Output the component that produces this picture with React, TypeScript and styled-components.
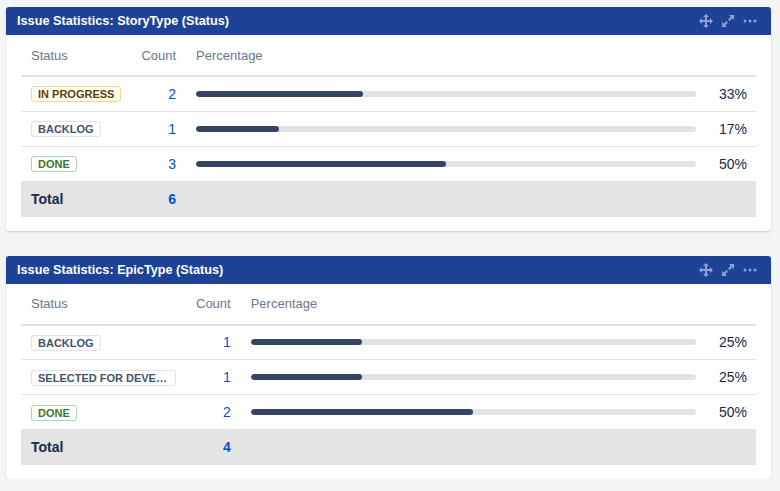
import React from 'react';
import styled, { createGlobalStyle } from 'styled-components';

const GlobalStyle = createGlobalStyle`
  body {
    margin: 0;
    background: #f4f5f7;
    font-family: "Liberation Sans", Arial, sans-serif;
    color: #172b4d;
  }
`;

const Page = styled.div`
  display: flex;
  flex-direction: column;
  gap: 25px;
  padding: 7px 9px 0 6px;
`;

const Card = styled.section`
  background: #fff;
  border-radius: 3px;
  box-shadow: 0 1px 2px rgba(9, 30, 66, 0.2);
  overflow: hidden;
`;

const CardHeader = styled.header`
  display: flex;
  align-items: center;
  justify-content: space-between;
  height: 28px;
  padding: 0 14px 0 11px;
  background: #1e4396;
`;

const Title = styled.h2`
  margin: 0;
  font-size: 12.7px;
  font-weight: bold;
  color: #fff;
`;

const Tools = styled.div`
  display: flex;
  align-items: center;
  gap: 8px;
  color: #8ea3d2;
`;

const Body = styled.div`
  padding: 0 15px 14px;
`;

const Table = styled.table`
  width: 100%;
  border-collapse: collapse;
  font-size: 14px;
`;

const Th = styled.th<{ $align?: string }>`
  height: 40px;
  padding: 0 10px;
  font-size: 13px;
  font-weight: normal;
  color: #6b778c;
  text-align: ${(p) => p.$align || 'left'};
  white-space: nowrap;
  border-bottom: 2px solid #dfe1e6;
`;

const Row = styled.tr<{ $total?: boolean }>`
  height: 35px;
  background: ${(p) => (p.$total ? '#e4e4e4' : '#fff')};
  border-bottom: 1px solid #dfe1e6;
`;

const Td = styled.td<{ $align?: string; $wide?: boolean }>`
  padding: 0 ${(p) => (p.$wide ? '0' : '10px')} 0 10px;
  text-align: ${(p) => p.$align || 'left'};
  white-space: nowrap;
  width: ${(p) => (p.$wide ? '100%' : 'auto')};
`;

const PctCell = styled.td`
  padding: 0 9px 0 23px;
  text-align: right;
  white-space: nowrap;
  color: #172b4d;
`;

const TotalLabel = styled.span`
  font-weight: bold;
  color: #172b4d;
`;

const Count = styled.span<{ $bold?: boolean }>`
  color: #0052cc;
  font-weight: ${(p) => (p.$bold ? 'bold' : 'normal')};
`;

const lozengeColors: Record<string, { color: string; border: string }> = {
  progress: { color: '#594300', border: '#ffd97a' },
  default: { color: '#42526e', border: '#dfe1e6' },
  done: { color: '#3a7a2b', border: '#add5b4' },
};

const Lozenge = styled.span<{ $kind: string }>`
  display: inline-block;
  box-sizing: border-box;
  max-width: 145px;
  height: 16px;
  line-height: 14px;
  padding: 0 6px;
  border: 1px solid ${(p) => lozengeColors[p.$kind].border};
  border-radius: 3px;
  font-size: 11px;
  font-weight: bold;
  text-transform: uppercase;
  color: ${(p) => lozengeColors[p.$kind].color};
  overflow: hidden;
  text-overflow: ellipsis;
  white-space: nowrap;
  vertical-align: middle;
`;

const Track = styled.div`
  height: 6px;
  border-radius: 3px;
  background: #e1e3e8;
  overflow: hidden;
`;

const Fill = styled.div`
  height: 100%;
  border-radius: 3px;
  background: #344563;
`;

const MoveIcon = () => (
  <svg width="14" height="14" viewBox="0 0 14 14" fill="currentColor">
    <path d="M7 0 L10 3 H8 V6 H11 V4 L14 7 L11 10 V8 H8 V11 H10 L7 14 L4 11 H6 V8 H3 V10 L0 7 L3 4 V6 H6 V3 H4 Z" />
  </svg>
);

const ExpandIcon = () => (
  <svg width="14" height="14" viewBox="0 0 14 14" fill="currentColor">
    <path d="M8 1 H13 V6 L11.2 4.2 L8.5 6.9 L7.1 5.5 L9.8 2.8 Z" />
    <path d="M6 13 H1 V8 L2.8 9.8 L5.5 7.1 L6.9 8.5 L4.2 11.2 Z" />
  </svg>
);

const MoreIcon = () => (
  <svg width="14" height="14" viewBox="0 0 14 14" fill="currentColor">
    <circle cx="2" cy="7" r="1.5" />
    <circle cx="7" cy="7" r="1.5" />
    <circle cx="12" cy="7" r="1.5" />
  </svg>
);

type Item = { status: string; kind: string; count: number };

function Gadget({ title, items }: { title: string; items: Item[] }) {
  const total = items.reduce((s, i) => s + i.count, 0);
  return (
    <Card>
      <CardHeader>
        <Title>{title}</Title>
        <Tools>
          <MoveIcon />
          <ExpandIcon />
          <MoreIcon />
        </Tools>
      </CardHeader>
      <Body>
        <Table>
          <thead>
            <tr>
              <Th>Status</Th>
              <Th $align="right">Count</Th>
              <Th>Percentage</Th>
              <Th />
            </tr>
          </thead>
          <tbody>
            {items.map((it) => {
              const pct = Math.round((it.count / total) * 100);
              return (
                <Row key={it.status}>
                  <Td>
                    <Lozenge $kind={it.kind}>{it.status}</Lozenge>
                  </Td>
                  <Td $align="right">
                    <Count>{it.count}</Count>
                  </Td>
                  <Td $wide>
                    <Track>
                      <Fill style={{ width: `${(it.count / total) * 100}%` }} />
                    </Track>
                  </Td>
                  <PctCell>{pct}%</PctCell>
                </Row>
              );
            })}
            <Row $total>
              <Td>
                <TotalLabel>Total</TotalLabel>
              </Td>
              <Td $align="right">
                <Count $bold>{total}</Count>
              </Td>
              <Td />
              <Td />
            </Row>
          </tbody>
        </Table>
      </Body>
    </Card>
  );
}

export default function App() {
  return (
    <>
      <GlobalStyle />
      <Page>
        <Gadget
          title="Issue Statistics: StoryType (Status)"
          items={[
            { status: 'In Progress', kind: 'progress', count: 2 },
            { status: 'Backlog', kind: 'default', count: 1 },
            { status: 'Done', kind: 'done', count: 3 },
          ]}
        />
        <Gadget
          title="Issue Statistics: EpicType (Status)"
          items={[
            { status: 'Backlog', kind: 'default', count: 1 },
            { status: 'Selected for Development', kind: 'default', count: 1 },
            { status: 'Done', kind: 'done', count: 2 },
          ]}
        />
      </Page>
    </>
  );
}
